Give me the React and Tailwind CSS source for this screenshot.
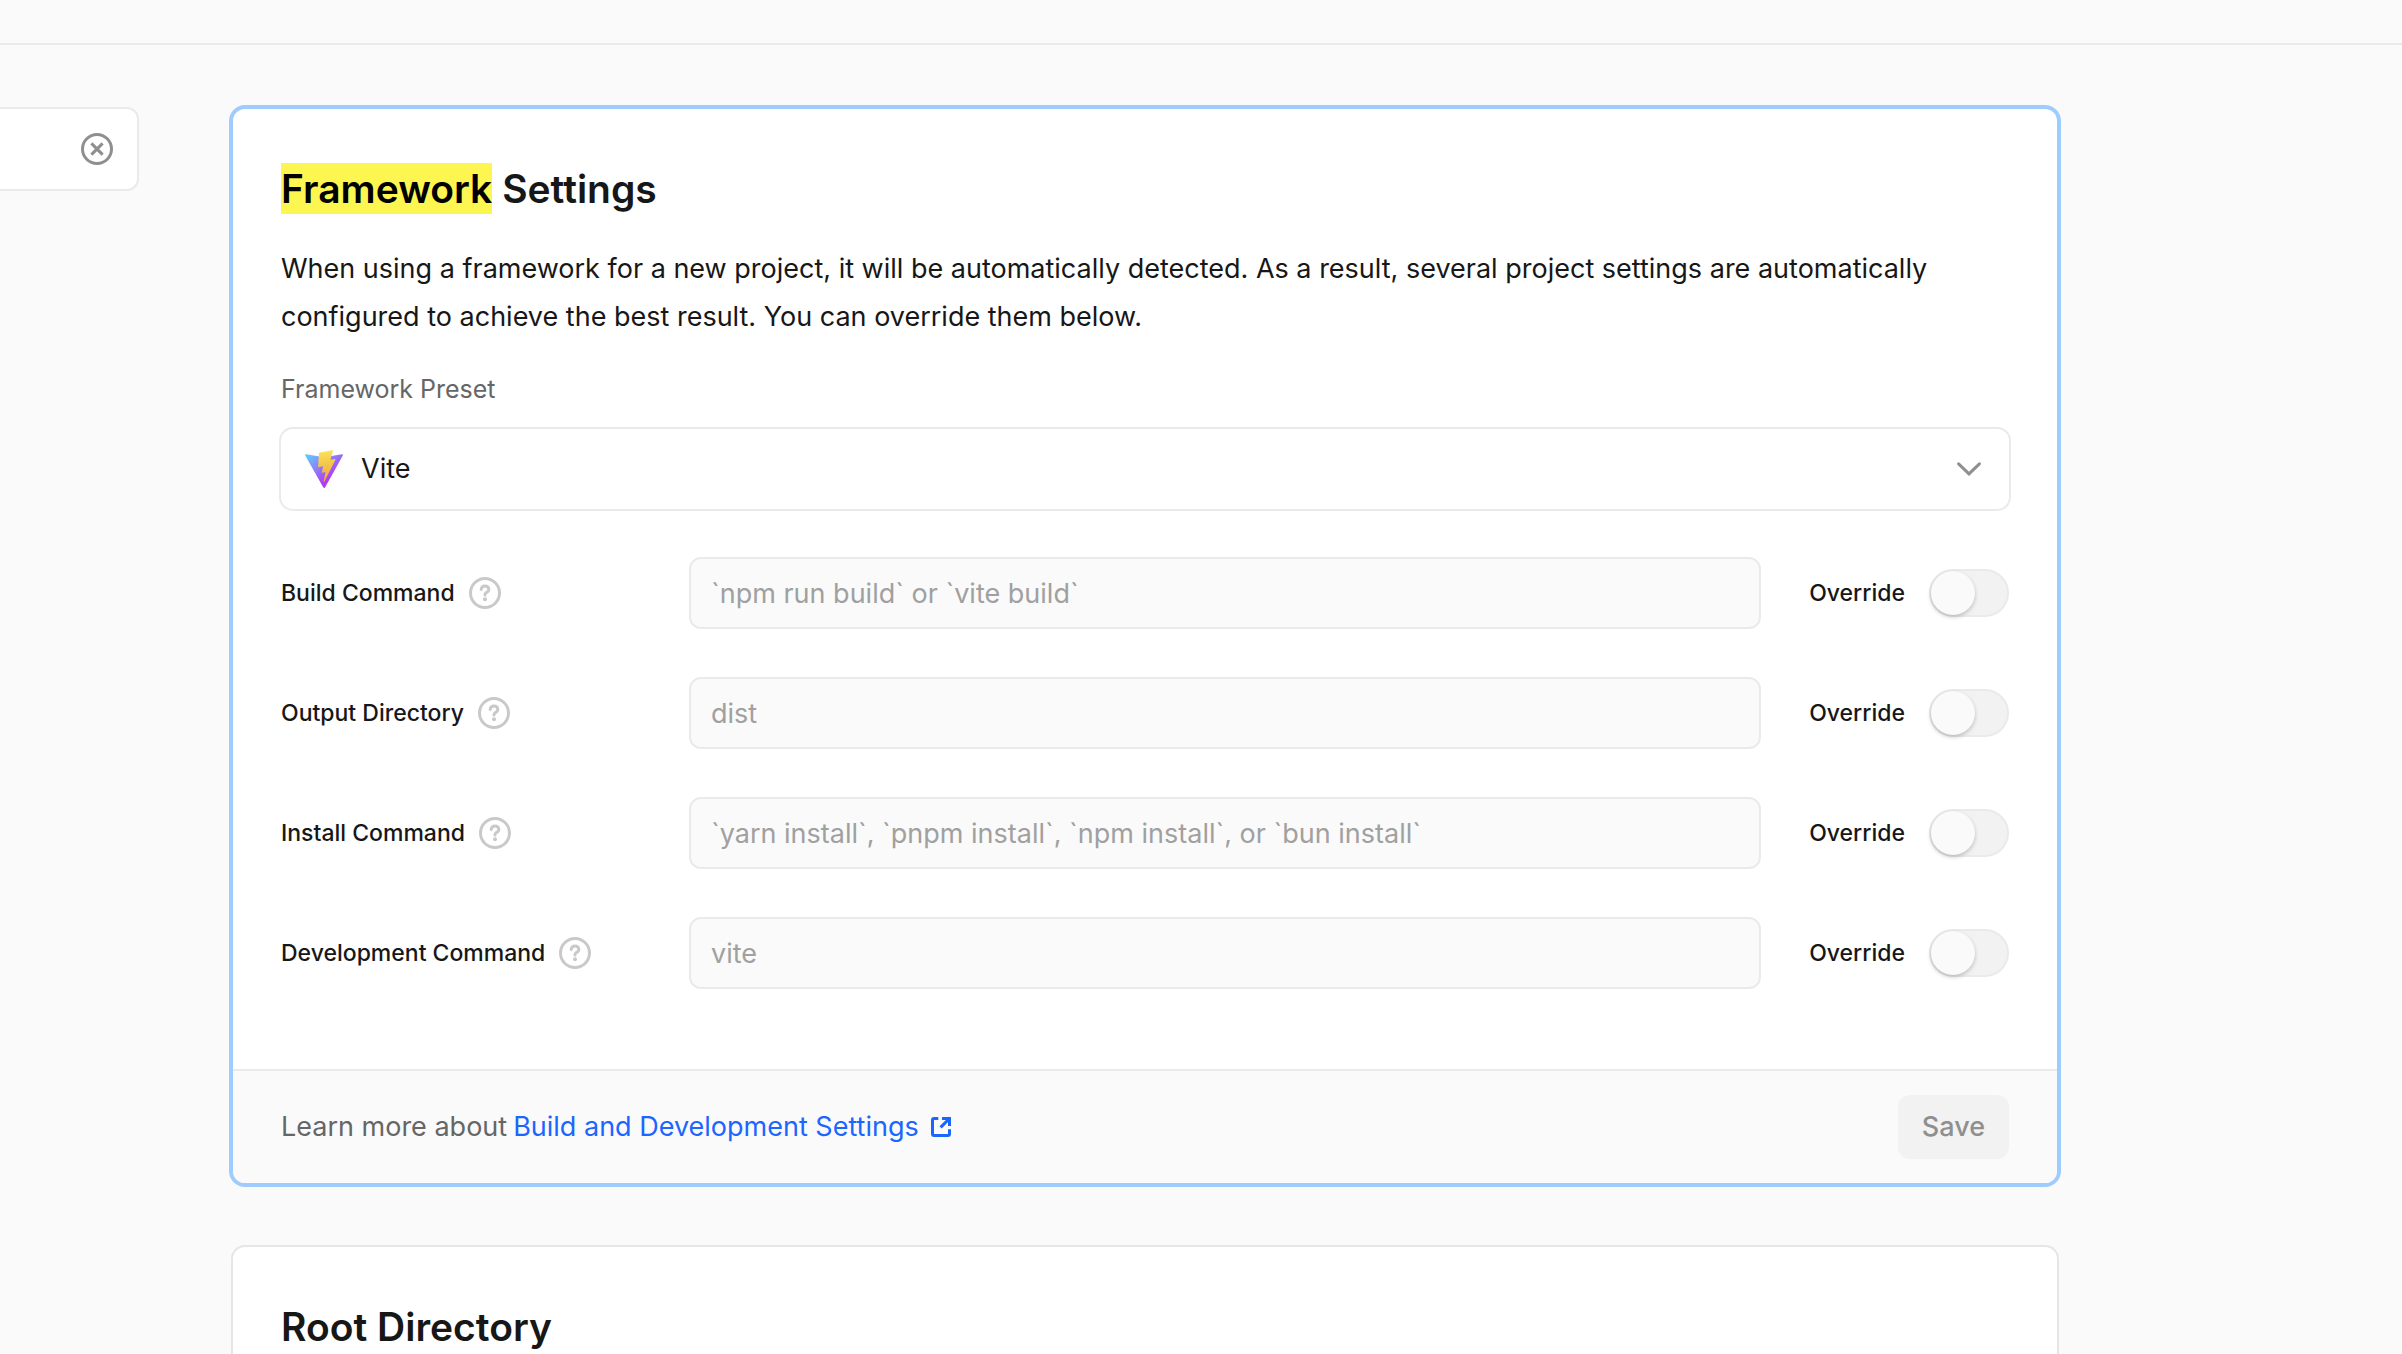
import React from "react";

const rows = [
  { id: "build", label: "Build Command", placeholder: "`npm run build` or `vite build`" },
  { id: "output", label: "Output Directory", placeholder: "dist" },
  { id: "install", label: "Install Command", placeholder: "`yarn install`, `pnpm install`, `npm install`, or `bun install`" },
  { id: "dev", label: "Development Command", placeholder: "vite" },
];

function ClearIcon() {
  return (
    <svg viewBox="0 0 32 32" className="size-8" fill="none" stroke="currentColor" strokeWidth="3" aria-hidden="true">
      <circle cx="16" cy="16" r="14.5" />
      <path d="M10.4 10.4 L21.6 21.6 M21.6 10.4 L10.4 21.6" />
    </svg>
  );
}

function HelpIcon() {
  return (
    <svg viewBox="0 0 32 32" className="size-8" fill="none" stroke="currentColor" strokeWidth="3" aria-hidden="true">
      <circle cx="16" cy="16" r="14.5" />
      <path strokeLinecap="round" d="M12.2 12.4 C12.4 10.2 13.9 8.9 16 8.9 C18.2 8.9 19.8 10.4 19.8 12.4 C19.8 14.2 18.6 14.9 17.3 15.6 C16.4 16.1 16 16.7 16 17.6 V17.9" />
      <circle cx="16" cy="22.2" r="2" fill="currentColor" stroke="none" />
    </svg>
  );
}

function ViteLogo() {
  return (
    <svg viewBox="0 0 256 257" className="h-[38px] w-[38px]" aria-hidden="true">
      <defs>
        <linearGradient id="vite-body" x1="-.828%" x2="57.636%" y1="7.652%" y2="78.411%">
          <stop offset="0%" stopColor="#64C8FF" />
          <stop offset="100%" stopColor="#B03CF2" />
        </linearGradient>
        <linearGradient id="vite-bolt" x1="43.376%" x2="50.316%" y1="2.242%" y2="89.03%">
          <stop offset="0%" stopColor="#FBE983" />
          <stop offset="8.333%" stopColor="#F9DD58" />
          <stop offset="100%" stopColor="#F1AA3C" />
        </linearGradient>
      </defs>
      <path fill="url(#vite-body)" d="M255.153 37.938L134.897 252.976c-2.483 4.44-8.862 4.466-11.382.048L.875 37.958c-2.746-4.814 1.371-10.646 6.827-9.67l120.385 21.517a6.537 6.537 0 0 0 2.322-.004l117.867-21.483c5.438-.991 9.574 4.796 6.877 9.62Z" />
      <path fill="url(#vite-bolt)" d="M185.432.063L96.44 17.501a3.268 3.268 0 0 0-2.634 3.014l-5.474 92.456a3.268 3.268 0 0 0 3.997 3.378l24.777-5.718c2.318-.535 4.413 1.507 3.936 3.838l-7.361 36.047c-.495 2.426 1.782 4.5 4.151 3.78l15.304-4.649c2.372-.72 4.652 1.36 4.15 3.788l-11.698 56.621c-.732 3.542 3.979 5.473 5.943 2.437l1.313-2.028l72.516-144.72c1.215-2.423-.88-5.186-3.54-4.672l-25.505 4.922c-2.396.462-4.435-1.77-3.759-4.114l16.646-57.705c.677-2.35-1.37-4.583-3.769-4.113Z" />
    </svg>
  );
}

function SettingRow({ id, label, placeholder }) {
  return (
    <div className="flex items-center">
      <div className="flex w-[408px] shrink-0 items-center gap-3.5">
        <label htmlFor={id} className="text-[23px] leading-8 font-medium">{label}</label>
        <button type="button" aria-label={"About " + label} className="text-[#c9c9c9]">
          <HelpIcon />
        </button>
      </div>
      <input
        id={id}
        type="text"
        disabled
        placeholder={placeholder}
        className="h-[72px] min-w-0 flex-1 rounded-xl border-2 border-[#eaeaea] bg-[#fafafa] px-5 text-[27px] placeholder:text-[#a0a0a0]"
      />
      <label className="ml-12 flex shrink-0 items-center gap-6 text-[23px] leading-8 font-medium">
        Override
        <span className="relative flex">
          <input
            type="checkbox"
            role="switch"
            className="peer h-12 w-20 appearance-none rounded-full border-2 border-[#eaeaea] bg-[#f2f2f2]"
          />
          <span className="pointer-events-none absolute top-0.5 left-0.5 size-11 rounded-full bg-[#fafafa] shadow-[0_2px_4px_rgba(0,0,0,0.22)] peer-checked:left-[34px]" />
        </span>
      </label>
    </div>
  );
}

export default function App() {
  return (
    <div className="min-h-screen overflow-hidden bg-[#fafafa] font-['Inter','Liberation_Sans',sans-serif] text-[#171717]">
      <header className="h-[45px] border-b-2 border-[#eaeaea]" />
      <div className="flex items-start gap-[94px] pt-16 pr-[345px]">
        <aside className="-mt-0.5 w-[139px] shrink-0">
          <div className="flex h-[84px] items-center rounded-r-xl border-2 border-l-0 border-[#eaeaea] bg-white pr-6">
            <input type="text" aria-label="Search settings" className="h-full w-0 min-w-0 flex-1 outline-none" />
            <button type="button" aria-label="Clear search" className="text-[#8f8f8f]">
              <ClearIcon />
            </button>
          </div>
        </aside>
        <main className="flex min-w-0 flex-1 flex-col gap-16">
          <section className="overflow-hidden rounded-xl bg-white ring-4 ring-[#9eccff]">
            <div className="px-12 pt-12 pb-20">
              <h2 className="text-[39px] leading-16 font-semibold">
                <mark className="bg-[#fdf550] py-0.5 text-black">Framework</mark> Settings
              </h2>
              <p className="mt-6 text-[27px] leading-12">
                When using a framework for a new project, it will be automatically detected. As a result, several project settings are automatically configured to achieve the best result. You can override them below.
              </p>
              <label htmlFor="preset" className="mt-8 block text-[25px] leading-8 text-[#666666]">Framework Preset</label>
              <div className="relative mt-6 flex items-center rounded-xl ring-2 ring-[#eaeaea]">
                <span className="pointer-events-none absolute left-6">
                  <ViteLogo />
                </span>
                <select id="preset" className="h-20 w-full appearance-none rounded-xl bg-transparent pr-16 pl-20 text-[27px]">
                  <option>Vite</option>
                </select>
                <svg viewBox="0 0 24 14" className="pointer-events-none absolute right-7 h-[14px] w-6 text-[#8f8f8f]" fill="none" stroke="currentColor" strokeWidth="3" strokeLinecap="round" aria-hidden="true">
                  <path d="M1.6 1.8 L12 11.8 L22.4 1.8" />
                </svg>
              </div>
              <div className="mt-12 flex flex-col gap-12">
                {rows.map((row) => (
                  <SettingRow key={row.id} {...row} />
                ))}
              </div>
            </div>
            <footer className="flex items-center justify-between border-t-2 border-[#eaeaea] bg-[#fafafa] px-12 py-6">
              <p className="flex items-center gap-1.5 text-[27px] leading-10 text-[#666666]">
                Learn more about
                <a href="#build-settings" className="flex items-center gap-3 text-[#1a66ff]">
                  Build and Development Settings
                  <svg viewBox="0 0 20 20" className="size-5" fill="none" stroke="currentColor" strokeWidth="3" aria-hidden="true">
                    <path d="M7.3 1.5 H3 Q1.5 1.5 1.5 3 V17 Q1.5 18.5 3 18.5 H17 Q18.5 18.5 18.5 17 V12.3" />
                    <path d="M11 1.5 H18.5 V9 M18 2 L9.6 10.4" />
                  </svg>
                </a>
              </p>
              <button type="button" disabled className="h-16 rounded-xl bg-[#f2f2f2] px-6 text-[27px] font-medium text-[#8f8f8f]">
                Save
              </button>
            </footer>
          </section>
          <section className="rounded-xl bg-white px-12 py-12 ring-2 ring-[#e6e6e6]">
            <h2 className="text-[39px] leading-16 font-semibold">Root Directory</h2>
          </section>
        </main>
      </div>
    </div>
  );
}
